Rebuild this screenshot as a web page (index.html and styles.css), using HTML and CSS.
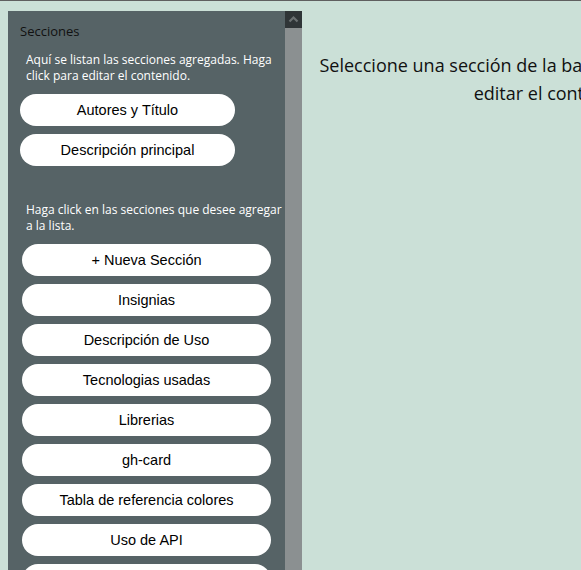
FILE: index.html
```html
<!DOCTYPE html>
<html lang="es">
<head>
<meta charset="utf-8">
<title>Editor de secciones</title>
<link rel="stylesheet" href="styles.css">
</head>
<body>
<div class="page">
  <aside class="sidebar">
    <div class="sidebar-content">
      <h2 class="title">Secciones</h2>
      <p class="hint">Aquí se listan las secciones agregadas. Haga click para editar el contenido.</p>
      <div class="list added">
        <button class="pill">Autores y Título</button>
        <button class="pill">Descripción principal</button>
      </div>
      <p class="hint hint-second">Haga click en las secciones que desee agregar a la lista.</p>
      <div class="list available">
        <button class="pill">+ Nueva Sección</button>
        <button class="pill">Insignias</button>
        <button class="pill">Descripción de Uso</button>
        <button class="pill">Tecnologias usadas</button>
        <button class="pill">Librerias</button>
        <button class="pill">gh-card</button>
        <button class="pill">Tabla de referencia colores</button>
        <button class="pill">Uso de API</button>
        <button class="pill">Contribuir</button>
        <button class="pill">Licencia</button>
      </div>
    </div>
    <div class="scrollbar">
      <div class="scroll-btn">
        <svg width="17" height="17" viewBox="0 0 17 17"><path d="M4.5 10.5 L8.5 6.5 L12.5 10.5" fill="none" stroke="#6b7172" stroke-width="2.2"/></svg>
      </div>
      <div class="scroll-track"></div>
    </div>
  </aside>
  <main class="main">
    <p class="placeholder">Seleccione una sección de la barra lateral izquierda para editar el contenido.</p>
  </main>
</div>
</body>
</html>
```
FILE: styles.css
```css
html, body {
  margin: 0;
  padding: 0;
  height: 100%;
  overflow: hidden;
}
body {
  background: #cbe0d7;
  border-top: 1px solid #5f5f5f;
  box-sizing: border-box;
  font-family: "Open Sans", sans-serif;
}
.page {
  display: flex;
  align-items: flex-start;
  padding: 10px 0 0 8px;
  width: 1000px;
}
.sidebar {
  display: flex;
  width: 294px;
  height: 620px;
  background: #566366;
  flex-shrink: 0;
}
.sidebar-content {
  width: 277px;
  padding: 11px 0 0 12px;
  box-sizing: border-box;
}
.title {
  margin: 0;
  font-size: 13px;
  font-weight: normal;
  color: #111;
  line-height: 18px;
}
.hint {
  margin: 12px 0 0 6px;
  font-size: 12px;
  line-height: 16px;
  color: #fff;
}
.hint-second {
  margin-top: 36px;
}
.list {
  display: flex;
  flex-direction: column;
  gap: 8px;
}
.added {
  margin-top: 10px;
  width: 215px;
}
.available {
  margin: 10px 0 0 2px;
  width: 249px;
}
.pill {
  height: 32px;
  border: none;
  border-radius: 16px;
  background: #fff;
  color: #000;
  font-family: "Liberation Sans", Arial, sans-serif;
  font-size: 14.5px;
  padding: 0;
  text-align: center;
}
.scrollbar {
  width: 17px;
  display: flex;
  flex-direction: column;
}
.scroll-btn {
  height: 17px;
  background: #2f3537;
}
.scroll-btn svg {
  display: block;
}
.scroll-track {
  flex: 1;
  background: #8b9091;
}
.main {
  width: 506px;
  flex-shrink: 0;
  padding-top: 40px;
}
.placeholder {
  margin: 0;
  padding: 0 10px;
  text-align: center;
  font-size: 18px;
  line-height: 28px;
  color: #111;
}
```
